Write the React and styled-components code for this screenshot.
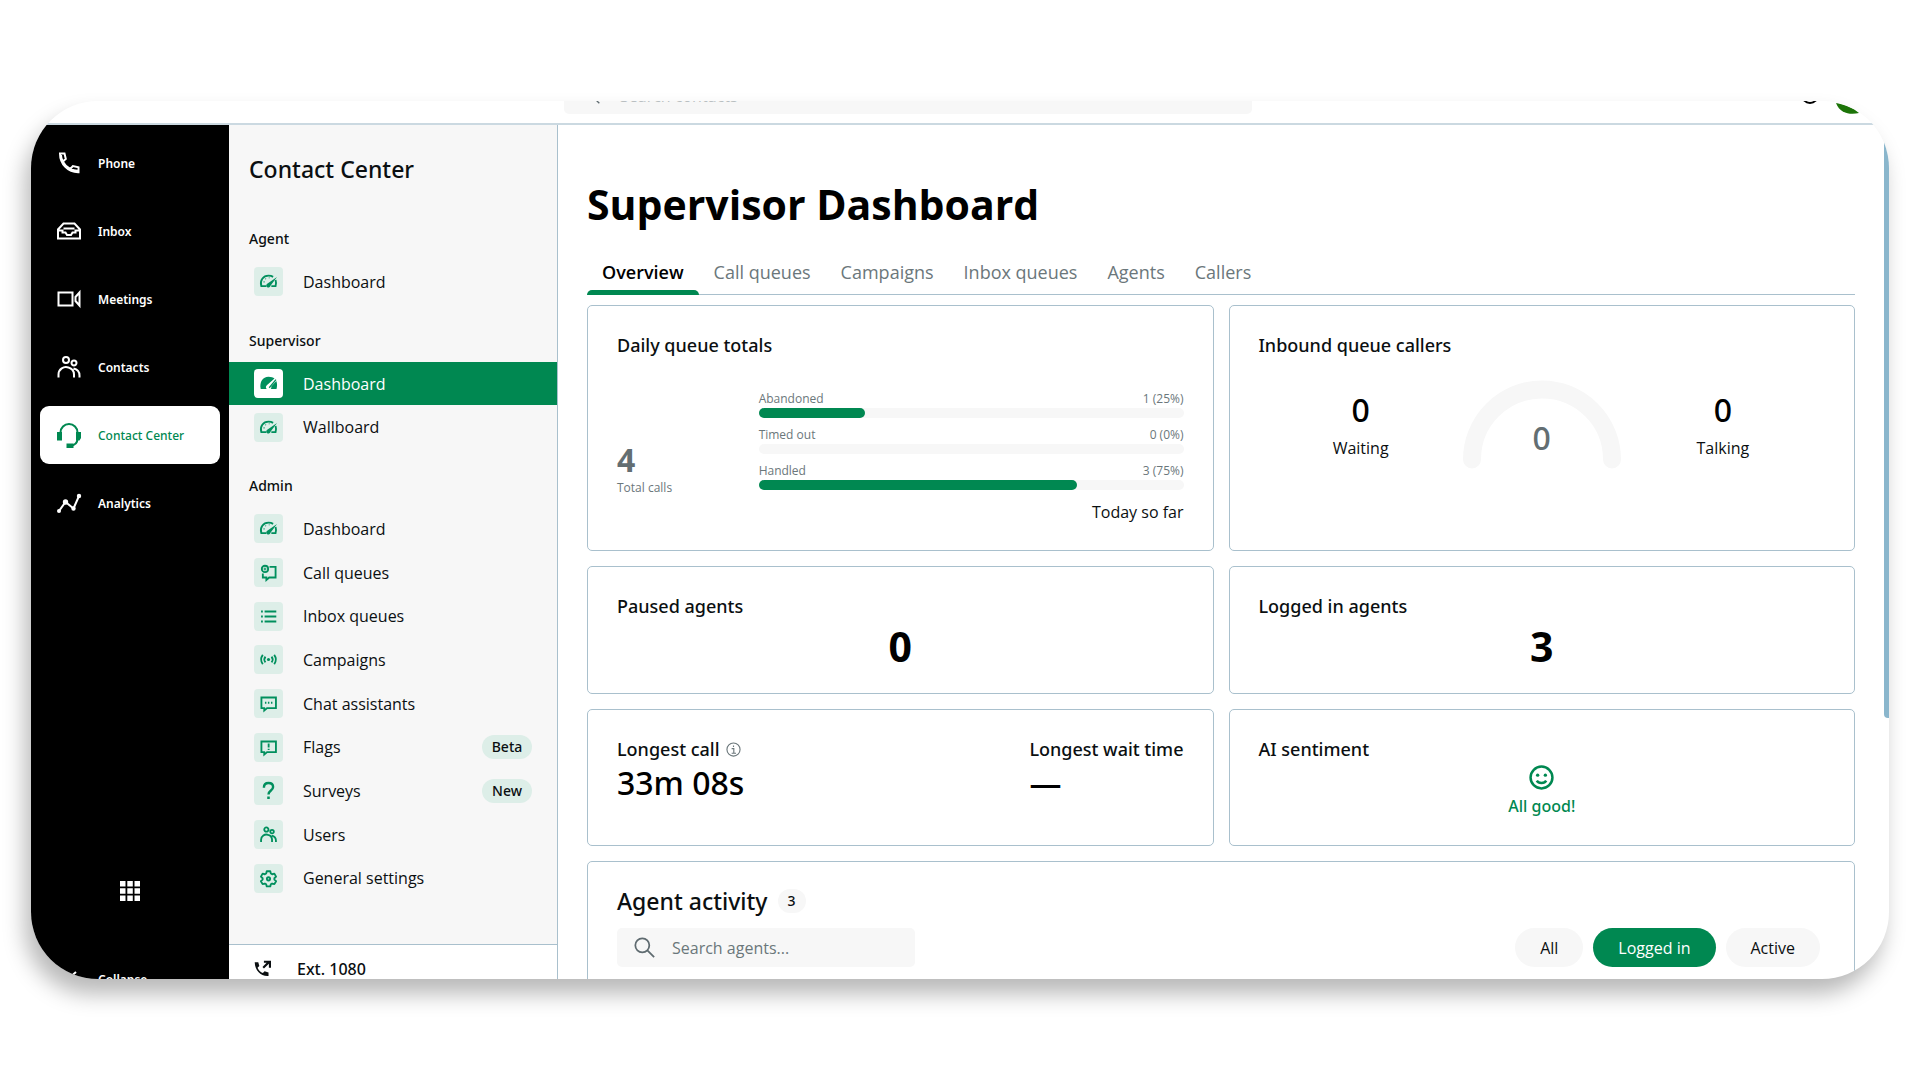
import React from 'react';
import styled, { createGlobalStyle } from 'styled-components';

const GlobalStyle = createGlobalStyle`
  body { margin: 0; background: #fff; }
`;

const navItems = [
  { label: 'Phone', icon: 'phone' },
  { label: 'Inbox', icon: 'inbox' },
  { label: 'Meetings', icon: 'video' },
  { label: 'Contacts', icon: 'people' },
  { label: 'Contact Center', icon: 'headset', active: true },
  { label: 'Analytics', icon: 'analytics' },
];

const sections = [
  { title: 'Agent', items: [{ label: 'Dashboard', icon: 'gauge' }] },
  {
    title: 'Supervisor',
    items: [
      { label: 'Dashboard', icon: 'gaugeFill', active: true },
      { label: 'Wallboard', icon: 'gauge' },
    ],
  },
  {
    title: 'Admin',
    items: [
      { label: 'Dashboard', icon: 'gauge' },
      { label: 'Call queues', icon: 'callQueue' },
      { label: 'Inbox queues', icon: 'list' },
      { label: 'Campaigns', icon: 'broadcast' },
      { label: 'Chat assistants', icon: 'chat' },
      { label: 'Flags', icon: 'flag', badge: 'Beta' },
      { label: 'Surveys', icon: 'question', badge: 'New' },
      { label: 'Users', icon: 'people' },
      { label: 'General settings', icon: 'gear' },
    ],
  },
];

const tabs = ['Overview', 'Call queues', 'Campaigns', 'Inbox queues', 'Agents', 'Callers'];

const totals = [
  { label: 'Abandoned', count: 1, percent: 25 },
  { label: 'Timed out', count: 0, percent: 0 },
  { label: 'Handled', count: 3, percent: 75 },
];

const filters = ['All', 'Logged in', 'Active'];

const icons = {
  phone: (
    <path d="M3 2.500h4.500l1.300 5.500-2.900 2.600c1.700 3.300 4 5.600 7.300 7.300l2.700-2.900 5.600 1.300v5C11 21.500 3 13 3 2.500zM5.900 10.600C4.600 8.500 4 6 4 4M13.200 17.900c2.400 1.300 4.900 1.900 7.300 1.900" />
  ),
  inbox: <path d="M1 19.500V10.500L6.500 4.500h11l5.500 6v9zM1 11.500h5.500M17.500 11.500H23M5.500 11.500v2h3l1.500 2.500h4l1.500-2.500h3v-2M6.500 9.500h11" />,
  video: <path d="M1.500 5.500h14v13h-14zM22.500 5.500v13l-4-4.500v-4z" />,
  people: (
    <path d="M9 8a3 3 0 1 0 0-6 3 3 0 0 0 0 6zM17 10.500a2.500 2.500 0 1 0 0-5 2.500 2.500 0 0 0 0 5zM1.500 22.500v-3a7.500 7.500 0 0 1 10-7c3.500 1 5.500 3.500 5.500 7v3M16.500 13.500c3.500.800 6 3.500 6 7v2" />
  ),
  headset: (
    <>
      <path d="M3.500 9.500a8.500 8.500 0 0 1 17 0M20.500 15.500c0 5-3 7-7.500 7.200" />
      <path d="M0 9h5v8.500H0zM24 9h-5v8.500h3.500L24 15zM9.500 20.500h7V25h-7z" fill="currentColor" stroke="none" />
    </>
  ),
  analytics: (
    <>
      <path d="M2 20l6.500-9 8 6.500L22 5" />
      <g fill="currentColor" stroke="none">
        <circle cx="2" cy="20" r="2" />
        <circle cx="8.500" cy="11" r="2.700" />
        <circle cx="16.500" cy="17.500" r="2.200" />
        <circle cx="22" cy="5" r="2.200" />
      </g>
    </>
  ),
  gauge: (
    <>
      <path d="M9 18.500H1.800C-.500 10.500 4.500 3.800 12 3.800c2.700 0 4.800.600 6.500 1.700M22 10c.800 2.500.800 5.500 0 8.500h-6" />
      <path d="M24 5.500L14.800 18a3 3 0 1 1-4.600-3z" fill="currentColor" stroke="none" />
      <path d="M5 12.500h1.500M7.500 7.800l1 1M13 6.500v1" strokeWidth="1.500" />
    </>
  ),
  gaugeFill: (
    <>
      <path d="M12 2.500c4 0 6.500 1 8.500 2.500L10 14a4 4 0 0 0-.500 5.700H1C-1 10 4 2.500 12 2.500zM23 8.500c1.500 3.500 1.300 7.500.300 11.200h-8.300c1-1 1.300-2.500.800-3.500z" fill="currentColor" stroke="none" />
      <path d="M22.500 6.500l-9.500 11.500" strokeWidth="1.800" />
    </>
  ),
  callQueue: (
    <>
      <path d="M13.500 4H22v15h-9l-4 3.500V19H4v-5.500" />
      <circle cx="7" cy="7" r="4.500" />
      <path d="M7 5v4M5 7h4" strokeWidth="1.500" />
    </>
  ),
  list: <path d="M6.500 5H23M6.500 12H23M6.500 19H23M1.500 5H4M1.500 12H4M1.500 19H4" />,
  broadcast: (
    <>
      <path d="M4 5.500c-3 4-3 9 0 13M20 5.500c3 4 3 9 0 13M7.700 8c-2 2.500-2 5.500 0 8M16.300 8c2 2.500 2 5.500 0 8" />
      <circle cx="12" cy="12" r="2.200" fill="currentColor" stroke="none" />
    </>
  ),
  chat: (
    <>
      <path d="M2 3.500h20.500v15H10l-4 3.500v-3.500H2z" />
      <path d="M7 11h2M11.200 11h2M15.500 11h2" />
    </>
  ),
  flag: (
    <>
      <path d="M2 3.500h20.500v15H10l-4 3.500v-3.500H2z" />
      <path d="M12.200 6.500v5.500M12.200 13.700v2" />
    </>
  ),
  question: (
    <>
      <path d="M5.500 8C5.500 3.500 8.500 1.500 12 1.500s6.500 2 6.500 5.700c0 4.800-6.500 4.800-6.500 10.300" strokeWidth="3.400" />
      <path d="M12 20.500V24" strokeWidth="3.600" />
    </>
  ),
  gear: (
    <>
      <path d="M9.500 1.800h5l.8 3.200 1.800 1 3.200-.9 2.400 4.200-2.400 2.300v2l2.400 2.200-2.400 4.200-3.200-.9-1.800 1-.8 3.100h-5l-.8-3.100-1.800-1-3.200.9-2.400-4.200 2.400-2.200v-2L1.300 9.300l2.400-4.200 3.200.9 1.800-1z" strokeLinejoin="round" />
      <circle cx="12" cy="12.500" r="2.300" />
    </>
  ),
  apps: (
    <path
      d="M2 2h5.500v5.500H2zM9.300 2h5.500v5.500H9.300zM16.500 2H22v5.500h-5.500zM2 9.300h5.500v5.500H2zM9.300 9.300h5.500v5.500H9.300zM16.500 9.300H22v5.500h-5.500zM2 16.500h5.500V22H2zM9.300 16.500h5.500V22H9.300zM16.500 16.500H22V22h-5.500z"
      fill="currentColor"
      stroke="none"
    />
  ),
  collapse: <path d="M19 5l-8 7 8 7" />,
  search: (
    <>
      <circle cx="9.500" cy="9.500" r="8" />
      <path d="M15 15l8 8" />
    </>
  ),
  info: (
    <>
      <circle cx="12" cy="12" r="10.500" />
      <path d="M9 10.500h3.500V18M9 18h7M12 5.500v2.500" />
    </>
  ),
  smile: (
    <>
      <circle cx="12" cy="12" r="10.500" />
      <path d="M7.500 15c1.500 3 7.500 3 9 0" />
      <circle cx="8.300" cy="9.800" r="1.600" fill="currentColor" stroke="none" />
      <circle cx="15.700" cy="9.800" r="1.600" fill="currentColor" stroke="none" />
    </>
  ),
  forward: (
    <>
      <path d="M1 3h5l1.500 5.500L5 11c1.500 3.500 4 6 7.500 7.500l2.500-2.500 5.500 1.500v5C10 23.500 1 14 1 3z" fill="currentColor" stroke="none" />
      <path d="M13 11l8-8M14 2.500h8.500V11" strokeWidth="3" />
    </>
  ),
};

function Icon({ name, size = 24, weight = 2 }) {
  return (
    <svg width={size} height={size} viewBox="0 0 24 24" fill="none" stroke="currentColor" strokeWidth={weight} overflow="visible" aria-hidden="true">
      {icons[name]}
    </svg>
  );
}

function App() {
  return (
    <Page>
      <GlobalStyle />
      <Frame>
        <TopBar>
          <TopSearch>
            <Icon name="search" size={16} />
            <TopInput type="text" placeholder="Search contacts" aria-label="Search contacts" />
          </TopSearch>
          <TopActions>
            <HelpIcon width="18" height="18" viewBox="0 0 18 18" fill="none" stroke="#000" strokeWidth="2" aria-hidden="true">
              <circle cx="9" cy="9" r="8" />
            </HelpIcon>
            <svg width="23" height="11" viewBox="0 0 23 11" aria-hidden="true">
              <path d="M0 0c10 2 17 5 23 10C15 12 4 11 0 0z" fill="#1c7408" />
            </svg>
          </TopActions>
        </TopBar>

        <Body>
          <Sidebar>
            {navItems.map((item) => (
              <SideLink href="#" key={item.label} $active={item.active}>
                <Icon name={item.icon} />
                {item.label}
              </SideLink>
            ))}
            <AppsButton aria-label="Apps">
              <Icon name="apps" />
            </AppsButton>
            <CollapseLink href="#">
              <Icon name="collapse" />
              Collapse
            </CollapseLink>
          </Sidebar>

          <Panel>
            <PanelNav>
              <PanelTitle>Contact Center</PanelTitle>
              {sections.map((section) => (
                <React.Fragment key={section.title}>
                  <GroupLabel>{section.title}</GroupLabel>
                  {section.items.map((item) => (
                    <PanelLink href="#" key={item.label} $active={item.active}>
                      <IconBox $active={item.active}>
                        <Icon name={item.icon} size={17} weight={2.6} />
                      </IconBox>
                      {item.label}
                      {item.badge && <Badge>{item.badge}</Badge>}
                    </PanelLink>
                  ))}
                </React.Fragment>
              ))}
            </PanelNav>
            <Extension>
              <Icon name="forward" size={17} />
              Ext. 1080
            </Extension>
          </Panel>

          <Main>
            <Title>Supervisor Dashboard</Title>
            <Tabs>
              {tabs.map((tab, i) => (
                <Tab key={tab} $active={i === 0}>{tab}</Tab>
              ))}
            </Tabs>

            <Cards>
              <Card $height={246}>
                <CardTitle>Daily queue totals</CardTitle>
                <Totals>
                  <TotalCalls>
                    <TotalNumber>4</TotalNumber>
                    <Small>Total calls</Small>
                  </TotalCalls>
                  <div>
                    {totals.map((row) => (
                      <Meter key={row.label}>
                        <MeterHead>
                          <Small>{row.label}</Small>
                          <Small>{row.count} ({row.percent}%)</Small>
                        </MeterHead>
                        <Track>
                          <Fill style={{ width: `${row.percent}%` }} />
                        </Track>
                      </Meter>
                    ))}
                    <Period>Today so far</Period>
                  </div>
                </Totals>
              </Card>

              <Card $height={246}>
                <CardTitle>Inbound queue callers</CardTitle>
                <Callers>
                  <Caller>
                    <Value>0</Value>
                    Waiting
                  </Caller>
                  <Gauge>
                    <svg width="158" height="89" viewBox="0 0 158 89" aria-hidden="true">
                      <path d="M9 79.500a70 70 0 0 1 140 0" fill="none" stroke="#f7f7f7" strokeWidth="18" strokeLinecap="round" />
                    </svg>
                    <GaugeValue>0</GaugeValue>
                  </Gauge>
                  <Caller>
                    <Value>0</Value>
                    Talking
                  </Caller>
                </Callers>
              </Card>

              <Card $height={128}>
                <CardTitle>Paused agents</CardTitle>
                <BigNumber>0</BigNumber>
              </Card>
              <Card $height={128}>
                <CardTitle>Logged in agents</CardTitle>
                <BigNumber>3</BigNumber>
              </Card>

              <Card $height={137}>
                <Split>
                  <div>
                    <CardTitle>
                      Longest call
                      <Info><Icon name="info" size={15} weight={1.8} /></Info>
                    </CardTitle>
                    <Value>33m 08s</Value>
                  </div>
                  <div>
                    <CardTitle>Longest wait time</CardTitle>
                    <Value>—</Value>
                  </div>
                </Split>
              </Card>
              <Card $height={137}>
                <CardTitle>AI sentiment</CardTitle>
                <Sentiment>
                  <Icon name="smile" size={25} weight={2.4} />
                  All good!
                </Sentiment>
              </Card>

              <ActivityCard>
                <ActivityTitle>
                  Agent activity
                  <Count>3</Count>
                </ActivityTitle>
                <Toolbar>
                  <SearchBox>
                    <Icon name="search" size={21} />
                    <SearchInput type="text" placeholder="Search agents..." aria-label="Search agents" />
                  </SearchBox>
                  <Filters>
                    {filters.map((name) => (
                      <FilterButton key={name} $active={name === 'Logged in'}>{name}</FilterButton>
                    ))}
                  </Filters>
                </Toolbar>
              </ActivityCard>
            </Cards>
          </Main>
          <ScrollTrack>
            <ScrollThumb />
          </ScrollTrack>
        </Body>
      </Frame>
    </Page>
  );
}

const mediumText = `
  font-family: 'Noto Sans', 'Open Sans', sans-serif;
  font-weight: 500;
`;

const Page = styled.div`
  box-sizing: border-box;
  height: 100vh;
  padding: 101px 31px;
  background: #fff;
  color: #0b0f11;
  font-family: 'Open Sans', 'Noto Sans', sans-serif;
  font-size: 16px;

  *, *::before { box-sizing: border-box; }
  svg { flex: none; }
  button, input { font-family: inherit; border: 0; }
  a { text-decoration: none; }
`;

const Frame = styled.div`
  display: flex;
  flex-direction: column;
  height: 100%;
  overflow: hidden;
  border-radius: 67px;
  background: #fff;
  box-shadow: -6px 15px 22px rgba(0, 0, 0, 0.28);
`;

const TopBar = styled.header`
  flex: none;
  display: flex;
  align-items: flex-end;
  justify-content: space-between;
  height: 24px;
  padding: 0 30px 9px 533px;
  overflow: hidden;
  border-bottom: 2px solid #cbd9e1;
`;

const TopSearch = styled.div`
  flex: none;
  display: flex;
  align-items: center;
  gap: 20px;
  width: 688px;
  height: 36px;
  padding: 0 20px;
  border-radius: 5px;
  background: #f7f7f7;
  color: #5f6b70;
`;

const TopInput = styled.input`
  flex: 1;
  padding: 0;
  background: transparent;
  font-size: 16px;

  &::placeholder { color: #b9bfc1; opacity: 1; }
`;

const TopActions = styled.div`
  display: flex;
  align-items: flex-end;
  gap: 17px;
`;

const HelpIcon = styled.svg`
  margin-bottom: 10px;
`;

const Body = styled.div`
  flex: 1;
  display: flex;
  min-height: 0;
`;

const Sidebar = styled.nav`
  flex: none;
  display: flex;
  flex-direction: column;
  gap: 10px;
  width: 198px;
  padding: 9px 9px 0;
  background: #000;
`;

const SideLink = styled.a`
  flex: none;
  display: flex;
  align-items: center;
  gap: 17px;
  height: 58px;
  padding-left: 17px;
  border-radius: 9px;
  background: ${(props) => (props.$active ? '#fff' : 'transparent')};
  color: ${(props) => (props.$active ? '#008851' : '#fff')};
  ${mediumText}
  font-size: 12px;
  font-weight: ${(props) => (props.$active ? 500 : 600)};
`;

const AppsButton = styled.button`
  align-self: center;
  margin-top: auto;
  margin-bottom: 37px;
  padding: 0;
  height: 24px;
  background: transparent;
  color: #fff;
`;

const CollapseLink = styled(SideLink)`
  margin-bottom: -29px;
`;

const Panel = styled.aside`
  flex: none;
  display: flex;
  flex-direction: column;
  width: 329px;
  border-right: 1px solid #a9c0cd;
  background: #f7f7f7;
`;

const PanelNav = styled.nav`
  flex: 1;
  display: flex;
  flex-direction: column;
  min-height: 0;
  padding-bottom: 44px;
`;

const PanelTitle = styled.h2`
  flex: none;
  margin: 0;
  padding: 0 20px 4px;
  ${mediumText}
  font-size: 23px;
  line-height: 88px;
`;

const GroupLabel = styled.h3`
  flex: none;
  margin: 0;
  padding: 0 20px;
  ${mediumText}
  font-size: 14px;
  line-height: 43px;

  a + & { margin-top: 15px; }
`;

const PanelLink = styled.a`
  flex: 0 1 44px;
  display: flex;
  align-items: center;
  gap: 20px;
  min-height: 32px;
  padding: 0 25px;
  background: ${(props) => (props.$active ? '#008851' : 'transparent')};
  color: ${(props) => (props.$active ? '#fff' : '#0b0f11')};
  font-size: 16px;
`;

const IconBox = styled.span`
  flex: none;
  display: flex;
  align-items: center;
  justify-content: center;
  width: 29px;
  height: 29px;
  border-radius: 4px;
  background: ${(props) => (props.$active ? '#fff' : '#ddeee8')};
  color: #008f5d;
`;

const Badge = styled.span`
  width: 50px;
  margin-left: auto;
  border-radius: 12px;
  background: #ddeee8;
  ${mediumText}
  font-size: 14px;
  line-height: 24px;
  text-align: center;
`;

const Extension = styled.div`
  flex: none;
  display: flex;
  align-items: flex-start;
  gap: 26px;
  height: 35px;
  padding: 0 25px;
  border-top: 1px solid #a9c0cd;
  background: #fff;
  ${mediumText}
  font-size: 16px;
  line-height: 48px;

  svg { margin-top: 15px; }
`;

const Main = styled.main`
  flex: 1;
  min-width: 0;
  padding: 48px 29px 0;
`;

const Title = styled.h1`
  margin: 0;
  color: #000;
  font-size: 41px;
  font-weight: 700;
  line-height: 62px;
`;

const Tabs = styled.div`
  display: flex;
  height: 60px;
  border-bottom: 1px solid #a9c0cd;
`;

const Tab = styled.button`
  position: relative;
  padding: 15px 15px 0;
  background: transparent;
  color: ${(props) => (props.$active ? '#000' : '#6b777b')};
  font-size: 18px;
  font-weight: ${(props) => (props.$active ? 600 : 400)};

  &::before {
    content: '';
    position: absolute;
    inset: auto 0 -1px;
    height: 5px;
    border-radius: 5px 5px 0 0;
    background: ${(props) => (props.$active ? '#008851' : 'transparent')};
  }
`;

const Cards = styled.div`
  display: grid;
  grid-template-columns: 1fr 1fr;
  gap: 15px;
  padding-top: 10px;
`;

const Card = styled.section`
  min-height: ${(props) => props.$height}px;
  padding: 27px 29px 16px;
  border: 1px solid #a9c0cd;
  border-radius: 5px;
`;

const CardTitle = styled.h2`
  display: flex;
  align-items: center;
  gap: 6px;
  margin: 0;
  ${mediumText}
  font-size: 18px;
  line-height: 24px;
`;

const Totals = styled.div`
  display: grid;
  grid-template-columns: 1fr 3fr;
  margin-top: 33px;
`;

const TotalCalls = styled.div`
  display: flex;
  flex-direction: column;
  padding-top: 50px;
  color: #636e72;
`;

const TotalNumber = styled.strong`
  font-size: 32px;
  font-weight: 700;
  line-height: 39px;
`;

const Small = styled.span`
  color: #6b777b;
  font-size: 12px;
  line-height: 18px;
`;

const Meter = styled.div`
  padding-bottom: 8px;
`;

const MeterHead = styled.div`
  display: flex;
  justify-content: space-between;
`;

const Track = styled.div`
  height: 10px;
  border-radius: 5px;
  background: #f7f7f7;
`;

const Fill = styled.div`
  height: 10px;
  border-radius: 5px;
  background: #008851;
`;

const Period = styled.div`
  font-size: 16px;
  line-height: 28px;
  text-align: right;
`;

const Callers = styled.div`
  display: flex;
  margin-top: 23px;
`;

const Caller = styled.div`
  flex: 1;
  display: flex;
  flex-direction: column;
  align-items: center;
  padding-top: 8px;
  font-size: 16px;
  line-height: 32px;
`;

const Value = styled.div`
  color: #000;
  ${mediumText}
  font-size: 32px;
  line-height: 44px;
`;

const Gauge = styled.div`
  display: flex;
  flex-direction: column;
  align-items: center;
`;

const GaugeValue = styled(Value)`
  margin-top: -53px;
  color: #636e72;
`;

const BigNumber = styled.div`
  color: #000;
  font-size: 41px;
  font-weight: 700;
  line-height: 56px;
  text-align: center;
`;

const Split = styled.div`
  display: flex;
  justify-content: space-between;
`;

const Info = styled.span`
  display: flex;
  color: #6b777b;
`;

const Sentiment = styled.div`
  display: flex;
  flex-direction: column;
  align-items: center;
  margin-top: 4px;
  color: #008851;
  ${mediumText}
  font-size: 16px;
  line-height: 32px;
`;

const ActivityCard = styled(Card)`
  grid-column: 1 / -1;
  padding: 23px 29px;
`;

const ActivityTitle = styled.h2`
  display: flex;
  align-items: center;
  gap: 10px;
  margin: 0;
  ${mediumText}
  font-size: 23px;
  line-height: 32px;
`;

const Count = styled.span`
  width: 28px;
  border-radius: 12px;
  background: #f7f7f7;
  font-size: 14px;
  line-height: 24px;
  text-align: center;
`;

const Toolbar = styled.div`
  display: flex;
  justify-content: space-between;
  margin-top: 11px;
`;

const SearchBox = styled.div`
  display: flex;
  align-items: center;
  gap: 17px;
  width: 298px;
  height: 39px;
  padding: 0 17px;
  border-radius: 5px;
  background: #f7f7f7;
  color: #5f6b70;
`;

const SearchInput = styled.input`
  flex: 1;
  min-width: 0;
  padding: 0;
  background: transparent;
  font-size: 16px;

  &::placeholder { color: #6b777b; opacity: 1; }
`;

const Filters = styled.div`
  display: flex;
  gap: 10px;
  padding-right: 5px;
`;

const FilterButton = styled.button`
  height: 39px;
  padding: 0 25px;
  border-radius: 20px;
  background: ${(props) => (props.$active ? '#008851' : '#f7f7f7')};
  color: ${(props) => (props.$active ? '#fff' : '#0b0f11')};
  font-size: 16px;
`;

const ScrollTrack = styled.div`
  flex: none;
  width: 5px;
`;

const ScrollThumb = styled.div`
  height: 593px;
  border-radius: 0 0 0 4px;
  background: #8ab6cc;
`;

export default App;
